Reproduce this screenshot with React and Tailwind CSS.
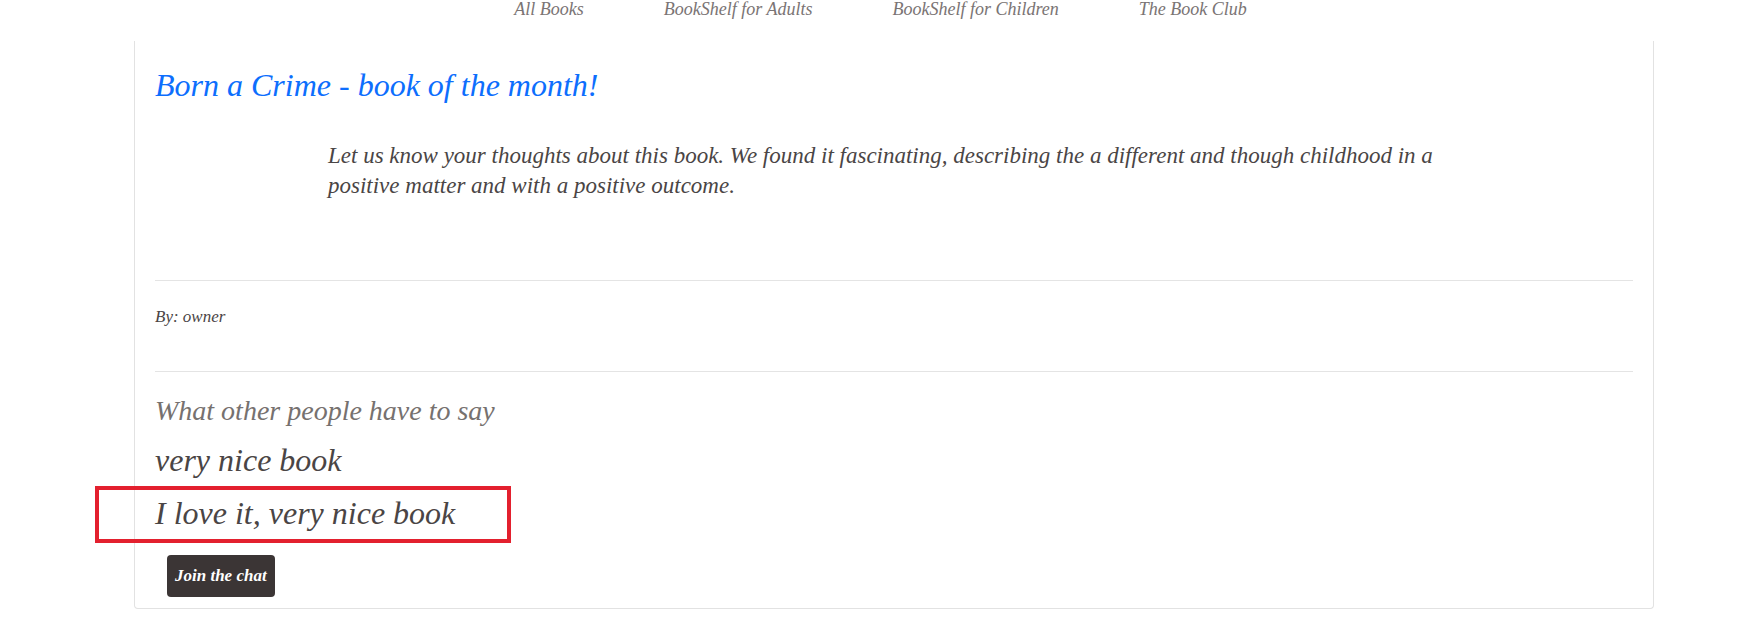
const NAV = ['All Books', 'BookShelf for Adults', 'BookShelf for Children', 'The Book Club'];

const COMMENTS = ['very nice book', 'I love it, very nice book'];

export default function App() {
  return (
    <div className="min-h-[625px] w-full bg-white italic text-[#4a4545] [font-family:'Liberation_Serif',serif]">
      {/* top nav, scrolled so only the link row peeks in */}
      <nav className="flex h-[41px] items-start justify-center gap-20 text-[18px] leading-[18px] text-[#7a7474]">
        {NAV.map(item => (
          <a key={item}>{item}</a>
        ))}
      </nav>

      {/* card's top edge is scrolled out of view, so no top border */}
      <div className="ml-[134px] w-[1520px] rounded-b-[4px] border border-t-0 border-[#e2e2e2] px-5 pb-[11px] pt-[23px]">
        <h1 className="text-[32px] leading-[43px] text-[#0d6efd]">Born a Crime - book of the month!</h1>

        <p className="mx-[173px] mt-[34px] text-[23px] leading-[30px]">
          Let us know your thoughts about this book. We found it fascinating, describing the a different and though childhood in a positive matter and with a positive outcome.
        </p>

        <hr className="mt-[79px] border-[#e4e4e4]" />
        <p className="mt-[25px] text-[17px] leading-[22px]">By: owner</p>
        <hr className="mt-[43px] border-[#e4e4e4]" />

        <h3 className="mt-[23px] text-[28px] leading-[32px] text-[#76716f]">What other people have to say</h3>

        <div className="mt-[13px] flex flex-col gap-[13px]">
          {COMMENTS.map((c, i) => (
            <div key={c} className="relative text-[32px] leading-[40px]">
              {c}
              {i === 1 && (
                <span className="pointer-events-none absolute -left-[60px] -top-[7px] h-[57px] w-[416px] border-[4px] border-[#e3202e]" />
              )}
            </div>
          ))}
        </div>

        <button className="ml-[12px] mt-[22px] h-[42px] rounded-[4px] bg-[#3b3535] px-[8px] text-[17px] font-bold italic text-white">
          Join the chat
        </button>
      </div>
    </div>
  );
}
